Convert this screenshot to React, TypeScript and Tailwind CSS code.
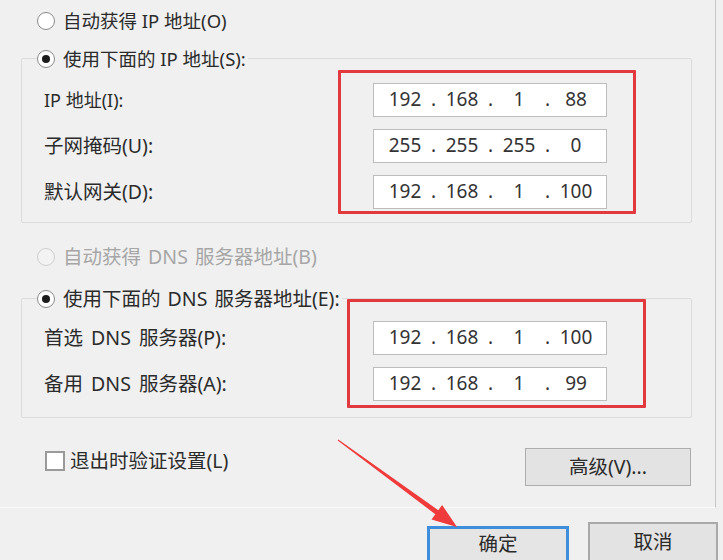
const font = "font-['Noto_Sans','Noto_Sans_CJK_SC',sans-serif]";

function Radio({ checked, disabled }: { checked?: boolean; disabled?: boolean }) {
  return (
    <span
      className={
        "flex items-center justify-center w-[18px] h-[18px] rounded-full border shrink-0 " +
        (disabled ? "border-[#cfcfcf] bg-[#f3f3f3]" : "border-[#8a8a8a] bg-white")
      }
    >
      {checked && <span className="w-[8px] h-[8px] rounded-full bg-[#1b1b1b]" />}
    </span>
  );
}

function IpBox({ parts }: { parts: string[] }) {
  return (
    <div className="flex items-center w-[234px] h-[34px] bg-white border border-[#bdbdbd] pl-[9px] pb-[2px] text-[19px] text-[#333]">
      {parts.map((p, i) => (
        <div key={i} className="flex items-center">
          <span className="w-[44px] text-center">{p}</span>
          {i < 3 && <span className="w-[13px] text-center">.</span>}
        </div>
      ))}
    </div>
  );
}

function Row({ label, parts, tight }: { label: string; parts: string[]; tight?: boolean }) {
  return (
    <div className="flex items-center h-[34px]">
      <span className={"w-[329px] text-[#2b2b2b] " + (tight ? "text-[18px]" : "[word-spacing:3px]")}>{label}</span>
      <IpBox parts={parts} />
    </div>
  );
}

export default function App() {
  return (
    <div className={`relative w-[723px] h-[560px] overflow-hidden bg-[#f0f0f0] text-[19.5px] leading-none ${font}`}>
      {/* tab page */}
      <div className="w-[716px] h-[508px] border-r border-r-[#c6c6c6] border-b border-b-[#fbfbfb] pt-[11px]">
        <div className="flex items-center gap-[8px] h-[20px] ml-[37px] text-[#2b2b2b]">
          <Radio />
          <span className="text-[18.5px]">自动获得 IP 地址(O)</span>
        </div>

        <div className="relative mt-[27px] ml-[21px] w-[671px] h-[165px] border border-[#dcdcdc] rounded-[2px]">
          <div className="-mt-[10px] ml-[15px] w-fit flex items-center gap-[8px] h-[20px] bg-[#f0f0f0] pr-[2px] text-[#2b2b2b]">
            <Radio checked />
            <span className="text-[18.5px]">使用下面的 IP 地址(S):</span>
          </div>
          <div className="mt-[14px] pl-[22px] flex flex-col gap-[12px]">
            <Row label="IP 地址(I):" parts={["192", "168", "1", "88"]} tight />
            <Row label="子网掩码(U):" parts={["255", "255", "255", "0"]} />
            <Row label="默认网关(D):" parts={["192", "168", "1", "100"]} />
          </div>
          <div className="absolute left-[316px] top-[11px] w-[298px] h-[144px] border-[3px] border-[#e2393f] rounded-[1px]" />
        </div>

        <div className="flex items-center gap-[8px] h-[20px] mt-[24px] ml-[37px] text-[#a6a6a6]">
          <Radio disabled />
          <span className="[word-spacing:2px]">自动获得 DNS 服务器地址(B)</span>
        </div>

        <div className="relative mt-[31px] ml-[21px] w-[671px] h-[120px] border border-[#dcdcdc] rounded-[2px]">
          <div className="-mt-[10px] ml-[15px] w-fit flex items-center gap-[8px] h-[20px] bg-[#f0f0f0] pr-[2px] text-[#2b2b2b]">
            <Radio checked />
            <span className="[word-spacing:2px]">使用下面的 DNS 服务器地址(E):</span>
          </div>
          <div className="mt-[12px] pl-[22px] flex flex-col gap-[12px]">
            <Row label="首选 DNS 服务器(P):" parts={["192", "168", "1", "100"]} />
            <Row label="备用 DNS 服务器(A):" parts={["192", "168", "1", "99"]} />
          </div>
          <div className="absolute left-[325px] top-0 w-[299px] h-[109px] border-[3px] border-[#e2393f] rounded-[1px]" />
        </div>

        <div className="flex justify-between mt-[30px] pl-[45px] pr-[24px]">
          <div className="flex items-center gap-[5px] h-[20px] mt-[3px] text-[#2b2b2b]">
            <span className="w-[20px] h-[20px] bg-white border-2 border-[#9a9a9a]" />
            <span>退出时验证设置(L)</span>
          </div>
          <button className="w-[166px] h-[38px] bg-[#e3e3e3] border border-[#adadad] text-[#2b2b2b]">
            高级(V)...
          </button>
        </div>
      </div>

      {/* dialog buttons */}
      <div className="flex items-start pl-[427px]">
        <button className="mt-[18px] w-[142px] h-[44px] bg-[#e5e5e5] border-[3px] border-[#3f8edb] text-[#2b2b2b] pb-[8px]">
          确定
        </button>
        <button className="mt-[14px] ml-[19px] w-[130px] h-[48px] bg-[#e3e3e3] border-2 border-[#a9a9a9] text-[#2b2b2b] pb-[8px]">
          取消
        </button>
      </div>

      {/* annotation arrow */}
      <svg className="absolute left-0 top-0 pointer-events-none" width="723" height="560" viewBox="0 0 723 560">
        <polygon
          points="338.3,439.6 438.3,510.2 442.1,504.9 457,527 431.5,519.5 435.3,514.2 337.7,440.4"
          fill="#ef3b3b"
        />
      </svg>
    </div>
  );
}
